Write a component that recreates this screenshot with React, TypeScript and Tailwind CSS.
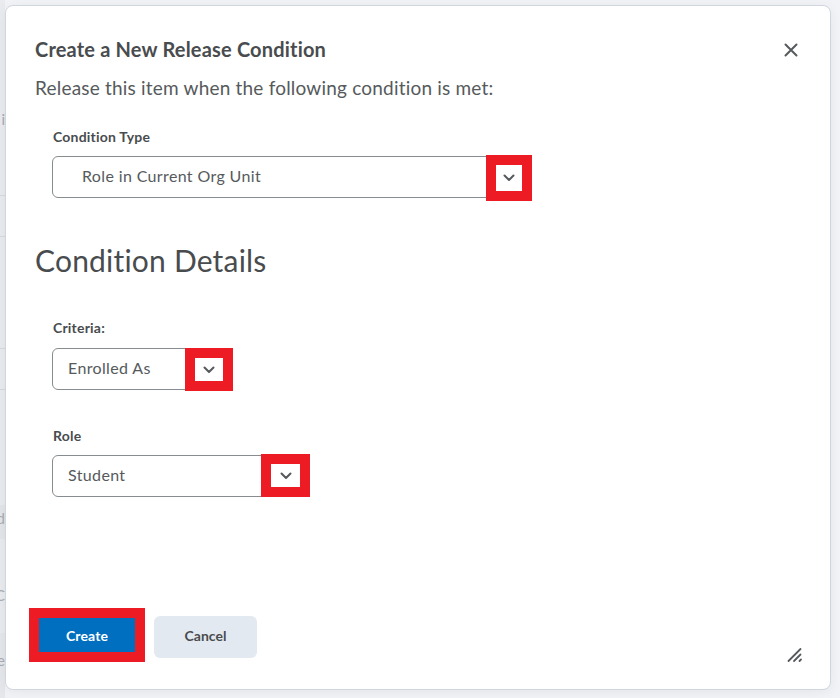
import React from "react";

function Chevron() {
  return (
    <svg width="12" height="8" viewBox="0 0 12 8" fill="none" stroke="#565a5c" strokeWidth="2" strokeLinecap="round" strokeLinejoin="round">
      <path d="M1.5 1.5 L6 6 L10.5 1.5" />
    </svg>
  );
}

function Select({ label, value, width, pad, mark, gap }: { label: string; value: string; width: string; pad: string; mark: string; gap: string }) {
  return (
    <div className="flex flex-col">
      <div className={`pl-[1px] text-[14px] leading-[20px] font-bold text-[#494c4e] tracking-[0.2px] ${gap}`}>{label}</div>
      <div className={`relative h-[42px] rounded-[6px] border border-[#868c8f] bg-white flex items-center pb-[3px] text-[16px] text-[#565a5c] tracking-[0.36px] ${width} ${pad}`}>
        {value}
        <div className={`absolute flex items-center justify-center bg-white border-[10px] border-[#ed1c24] ${mark}`}>
          <Chevron />
        </div>
      </div>
    </div>
  );
}

function Peek({ text, cls }: { text: string; cls: string }) {
  return <div className={`shrink-0 flex justify-end overflow-hidden text-[15px] text-[#a9adb2] ${cls}`}>{text}</div>;
}

export default function App() {
  return (
    <div className="w-[840px] h-[698px] bg-[#f1f3f6] flex font-['Lato','Liberation_Sans',sans-serif] overflow-hidden">
      <div className="w-[5px] shrink-0 flex flex-col bg-[#e9ebef]">
        <div className="h-[112px] shrink-0" />
        <Peek text="i" cls="h-[14px] leading-[14px]" />
        <div className="h-[70px] shrink-0 border-b border-[#d6d9dd]" />
        <div className="h-[41px] shrink-0 border-b border-[#d6d9dd]" />
        <div className="h-[112px] shrink-0 border-b border-[#d6d9dd]" />
        <div className="h-[41px] shrink-0 border-b border-[#d6d9dd]" />
        <div className="h-[115px] shrink-0" />
        <Peek text="d" cls="h-[34px] leading-[26px] bg-[#e3e5e9]" />
        <div className="h-[46px] shrink-0" />
        <Peek text="C" cls="h-[20px] leading-[20px]" />
        <div className="h-[28px] shrink-0" />
        <Peek text="e" cls="h-[65px] leading-[54px] bg-[#e5e7eb]" />
      </div>
      <div className="flex-1 min-w-0 pt-[5px] pr-[9px] pb-[8px]">
        <div className="relative h-full bg-white rounded-[8px] border border-[#cfd6e0] shadow-[0_2px_12px_rgba(0,0,0,0.06)] flex flex-col pl-[29px] pt-[29px]">
          <div className="text-[20px] leading-[28px] font-bold text-[#494c4e] tracking-[0.18px]">Create a New Release Condition</div>
          <button className="absolute right-[32px] top-[37px] text-[#565a5c]">
            <svg width="14" height="14" viewBox="0 0 14 14" fill="none" stroke="#565a5c" strokeWidth="2" strokeLinecap="round" className="block">
              <path d="M1.5 1.5 L12.5 12.5 M12.5 1.5 L1.5 12.5" />
            </svg>
          </button>
          <div className="mt-[11px] text-[19px] leading-[28px] text-[#565a5c] tracking-[0.2px]">Release this item when the following condition is met:</div>

          <div className="pl-[17px] mt-[25px]">
            <Select label="Condition Type" value="Role in Current Org Unit" width="w-[480px]" pad="pl-[29px]" mark="left-[433px] top-[-2px] w-[46px] h-[46px]" gap="mb-[9px]" />
          </div>

          <div className="mt-[40px] text-[30px] leading-[44px] text-[#494c4e] tracking-[0.2px]">Condition Details</div>

          <div className="pl-[17px] mt-[36px]">
            <Select label="Criteria:" value="Enrolled As" width="w-[165px]" pad="pl-[15px]" mark="left-[132px] top-[-1px] w-[48px] h-[43px]" gap="mb-[10px]" />
          </div>
          <div className="pl-[17px] mt-[36px]">
            <Select label="Role" value="Student" width="w-[240px]" pad="pl-[15px]" mark="left-[208px] top-[-2px] w-[49px] h-[43px]" gap="mb-[9px]" />
          </div>

          <div className="mt-auto mb-[27px] flex items-start gap-[9px] ml-[-6px]">
            <div className="border-[10px] border-[#ed1c24]">
              <button className="block w-[96px] h-[34px] bg-[#006fbf] text-white text-[14px] font-bold tracking-[0.1px]">Create</button>
            </div>
            <button className="mt-[8px] w-[103px] h-[42px] pb-[3px] rounded-[6px] bg-[#e3e9f1] text-[#494c4e] text-[14px] font-bold">Cancel</button>
          </div>

          <svg width="16" height="16" viewBox="0 0 16 16" fill="none" stroke="#565a5c" strokeWidth="1.8" strokeLinecap="round" className="absolute left-[781px] top-[641px]">
            <path d="M1.5 14 L13.5 2 M7 14 L13.5 7.5 M12.5 14 L14 12.5" />
          </svg>
        </div>
      </div>
    </div>
  );
}
